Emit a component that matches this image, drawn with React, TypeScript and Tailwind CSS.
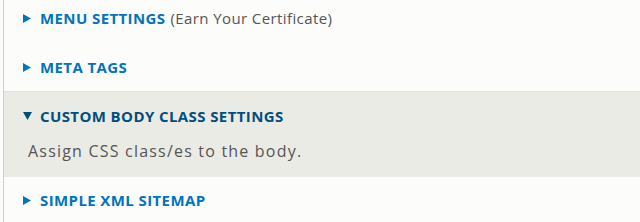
function Arrow({ open }: { open?: boolean }) {
  return (
    <span className="flex w-[17px] shrink-0 items-center">
      {open ? (
        <svg width="9" height="8" viewBox="0 0 9 8" className="fill-[#004f80]">
          <path d="M0 0h9L4.5 8z" />
        </svg>
      ) : (
        <svg width="8" height="9" viewBox="0 0 8 9" className="fill-[#0074bd]">
          <path d="M0 0l8 4.5L0 9z" />
        </svg>
      )}
    </span>
  );
}

export default function App() {
  return (
    <div className="h-[222px] w-[640px] overflow-hidden bg-[#fcfcfa] font-['Open_Sans',sans-serif]">
      <div className="ml-[3px] h-full border-l border-[#cfcfcb]">
        <div className="flex h-[36px] items-center pl-[19px]">
          <Arrow />
          <span className="text-[15px] font-bold uppercase tracking-[0.4px] text-[#0074bd]">Menu settings</span>
          <span className="ml-[5px] text-[15px] tracking-[0.4px] text-[#555]">(Earn Your Certificate)</span>
        </div>
        <div className="mt-[9px] flex h-[44px] items-center pl-[19px]">
          <Arrow />
          <span className="text-[15px] font-bold uppercase tracking-[0.4px] text-[#0074bd]">Meta tags</span>
        </div>
        <div className="mt-[2px] border-t border-[#e2e2dc] bg-[#ebebe6] pb-[15px]">
          <div className="flex h-[48px] items-center pl-[19px]">
            <Arrow open />
            <span className="text-[15px] font-bold uppercase tracking-[0.4px] text-[#004f80]">Custom body class settings</span>
          </div>
          <p className="pl-[24px] text-[16px] leading-[22px] tracking-[1.2px] text-[#555]">Assign CSS class/es to the body.</p>
        </div>
        <div className="flex h-[46px] items-center pl-[19px]">
          <Arrow />
          <span className="text-[15px] font-bold uppercase tracking-[0.4px] text-[#0074bd]">Simple XML sitemap</span>
        </div>
      </div>
    </div>
  );
}
